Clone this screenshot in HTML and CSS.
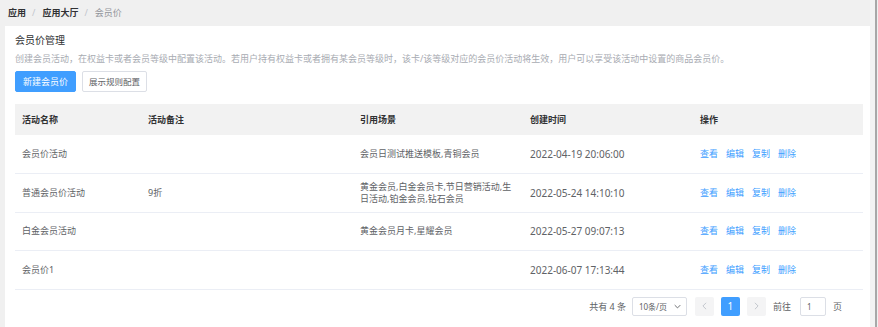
FILE: index.html
```html
<!DOCTYPE html>
<html lang="zh-CN">
<head>
<meta charset="utf-8">
<title>会员价</title>
<link rel="stylesheet" href="styles.css">
</head>
<body>
<div class="page">
  <div class="main">
    <nav class="crumbs">
      <span class="crumb strong">应用</span>
      <span class="sep">/</span>
      <span class="crumb strong">应用大厅</span>
      <span class="sep">/</span>
      <span class="crumb">会员价</span>
    </nav>
    <section class="card">
      <h2 class="title">会员价管理</h2>
      <p class="desc">创建会员活动，在权益卡或者会员等级中配置该活动。若用户持有权益卡或者拥有某会员等级时，该卡/该等级对应的会员价活动将生效，用户可以享受该活动中设置的商品会员价。</p>
      <div class="actions">
        <button class="btn primary">新建会员价</button>
        <button class="btn">展示规则配置</button>
      </div>
      <table class="grid">
        <colgroup>
          <col class="c1"><col class="c2"><col class="c3"><col class="c4"><col class="c5">
        </colgroup>
        <thead>
          <tr><th>活动名称</th><th>活动备注</th><th>引用场景</th><th>创建时间</th><th>操作</th></tr>
        </thead>
        <tbody>
          <tr>
            <td>会员价活动</td><td></td><td>会员日测试推送模板,青铜会员</td><td class="time">2022-04-19 20:06:00</td>
            <td><span class="ops"><a>查看</a><a>编辑</a><a>复制</a><a>删除</a></span></td>
          </tr>
          <tr>
            <td>普通会员价活动</td><td>9折</td><td>黄金会员,白金会员卡,节日营销活动,生日活动,铂金会员,钻石会员</td><td class="time">2022-05-24 14:10:10</td>
            <td><span class="ops"><a>查看</a><a>编辑</a><a>复制</a><a>删除</a></span></td>
          </tr>
          <tr>
            <td>白金会员活动</td><td></td><td>黄金会员月卡,星耀会员</td><td class="time">2022-05-27 09:07:13</td>
            <td><span class="ops"><a>查看</a><a>编辑</a><a>复制</a><a>删除</a></span></td>
          </tr>
          <tr>
            <td>会员价1</td><td></td><td></td><td class="time">2022-06-07 17:13:44</td>
            <td><span class="ops"><a>查看</a><a>编辑</a><a>复制</a><a>删除</a></span></td>
          </tr>
        </tbody>
      </table>
      <div class="pager">
        <span class="total">共有 4 条</span>
        <span class="size"><span>10条/页</span><svg class="chev" viewBox="0 0 10 6" width="7" height="5"><path d="M1 1l4 4 4-4" fill="none" stroke="#606266" stroke-width="1.3"/></svg></span>
        <span class="pbtn"><svg viewBox="0 0 6 10" width="5" height="8"><path d="M5 1L1 5l4 4" fill="none" stroke="#c0c4cc" stroke-width="1.2"/></svg></span>
        <span class="pbtn active">1</span>
        <span class="pbtn"><svg viewBox="0 0 6 10" width="5" height="8"><path d="M1 1l4 4-4 4" fill="none" stroke="#c0c4cc" stroke-width="1.2"/></svg></span>
        <span class="goto">前往</span>
        <span class="jump">1</span>
        <span class="unit">页</span>
      </div>
    </section>
  </div>
  <div class="rail"></div>
</div>
</body>
</html>
```
FILE: styles.css
```css
* { box-sizing: border-box; }
html, body { margin: 0; padding: 0; }
body {
  font-family: "Noto Sans", "Noto Sans CJK SC", sans-serif;
  font-size: 9px;
  color: #606266;
  background: #f0f0f0;
}
.page {
  display: flex;
  height: 327px;
  overflow: hidden;
}
.main {
  flex: 1;
  padding: 0 0 0 5px;
  display: flex;
  flex-direction: column;
}
.rail {
  width: 8px;
  background: #f3f3f3;
  border-right: 2px solid #a8a8a8;
  margin-right: 1px;
}
.crumbs {
  height: 26px;
  display: flex;
  align-items: center;
  padding-left: 3px;
  padding-bottom: 1px;
  line-height: 1;
}
.crumb { color: #909399; }
.crumb.strong { color: #303133; font-weight: 700; }
.sep { color: #c0c4cc; margin: 0 7px 0 6px; }
.card {
  flex: 1;
  background: #fff;
  padding: 7px 7px 0 10px;
}
.title {
  margin: 0;
  font-size: 10px;
  font-weight: 400;
  color: #303133;
  line-height: 14px;
}
.desc {
  margin: 5px 0 0;
  color: #a8abb2;
  line-height: 13px;
  white-space: nowrap;
}
.actions {
  display: flex;
  gap: 6px;
  margin-top: 6px;
}
.btn {
  font: inherit;
  font-size: 8.5px;
  height: 21px;
  padding: 0 6px;
  border: 1px solid #dcdfe6;
  background: #fff;
  color: #606266;
  border-radius: 2px;
  line-height: 19px;
}
.btn.primary {
  font-size: 9px;
  background: #409eff;
  border-color: #409eff;
  color: #fff;
  padding: 0 7px;
}
.grid {
  margin-top: 12px;
  width: 848px;
  border-collapse: collapse;
  table-layout: fixed;
}
.c1 { width: 126px; }
.c2 { width: 212px; }
.c3 { width: 170px; }
.c4 { width: 170px; }
.c5 { width: 170px; }
.grid th {
  background: #f2f2f2;
  height: 31px;
  text-align: left;
  font-weight: 600;
  color: #303133;
  padding: 0 7px;
}
.grid td {
  height: 38.5px;
  padding: 0 7px;
  border-bottom: 1px solid #ebeef5;
  line-height: 12px;
  color: #606266;
  vertical-align: middle;
}
.grid td.time { font-size: 10px; }
.ops { display: flex; gap: 8px; }
.ops a { color: #409eff; }
.pager {
  display: flex;
  align-items: center;
  justify-content: flex-end;
  height: 19px;
  margin-top: 7px;
  padding-right: 21px;
  color: #606266;
}
.total { margin-right: 6px; }
.size {
  flex: 0 0 55px;
  height: 19px;
  border: 1px solid #dcdfe6;
  border-radius: 2px;
  display: flex;
  align-items: center;
  justify-content: space-between;
  padding: 0 5px 0 6px;
  margin-right: 8px;
  color: #606266;
  font-size: 8px;
}
.pbtn {
  width: 19px;
  height: 19px;
  background: #f4f4f5;
  display: flex;
  align-items: center;
  justify-content: center;
  margin-right: 7px;
  border-radius: 2px;
}
.pbtn.active { background: #409eff; color: #fff; font-size: 10px; }
.goto { margin-right: 9px; }
.jump {
  width: 26px;
  height: 19px;
  border: 1px solid #dcdfe6;
  border-radius: 2px;
  display: flex;
  align-items: center;
  padding-left: 6px;
  margin-right: 7px;
  font-size: 8px;
}
```
